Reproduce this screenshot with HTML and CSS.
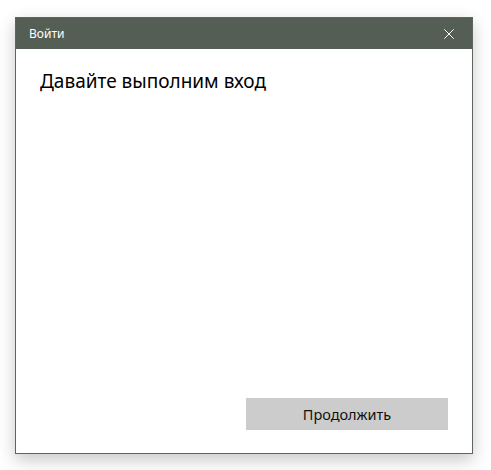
FILE: index.html
```html
<!DOCTYPE html>
<html lang="ru">
<head>
    <meta charset="UTF-8">
    <meta name="viewport" content="width=device-width, initial-scale=1.0">
    <title>Войти</title>
    <link rel="stylesheet" href="styles.css">
</head>
<body>

<div class="dialog">
    <header class="titlebar">
        <span class="title">Войти</span>
        <button class="close" aria-label="Закрыть">
            <svg width="10" height="10" viewBox="0 0 10 10">
                <path d="M0.3 0.3 L9.7 9.7 M9.7 0.3 L0.3 9.7" stroke="#fff" stroke-width="1" fill="none"/>
            </svg>
        </button>
    </header>

    <div class="content">
        <h1>Давайте выполним вход</h1>
        <div class="actions">
            <button class="primary">Продолжить</button>
        </div>
    </div>
</div>

</body>
</html>
```

FILE: styles.css
```css
body {
    margin: 0;
    padding: 17px 18px 16px 15px;
    background-color: #fff;
    font-family: 'Noto Sans', 'Open Sans', sans-serif;
    color: #000;
}

.dialog {
    width: 456px;
    height: 435px;
    border: 1px solid #5d665e;
    background-color: #fff;
    display: flex;
    flex-direction: column;
    box-shadow: 0 6px 16px rgba(0, 0, 0, 0.22);
}

.titlebar {
    height: 31px;
    background-color: #545e55;
    display: flex;
    align-items: center;
    justify-content: space-between;
    padding: 0 18px 0 13px;
}

.title {
    color: #fff;
    font-size: 12px;
}

.close {
    background: none;
    border: none;
    padding: 0;
    width: 10px;
    height: 10px;
    display: flex;
}

.content {
    flex: 1;
    display: flex;
    flex-direction: column;
    padding: 0 24px 23px 24px;
}

h1 {
    font-weight: normal;
    font-size: 19px;
    margin: 18px 0 0 0;
    line-height: 28px;
}

.actions {
    margin-top: auto;
    display: flex;
    justify-content: flex-end;
}

.primary {
    width: 202px;
    height: 32px;
    background-color: #cccccc;
    border: none;
    font-family: inherit;
    font-size: 14.5px;
    color: #111;
    padding: 0;
}
```
